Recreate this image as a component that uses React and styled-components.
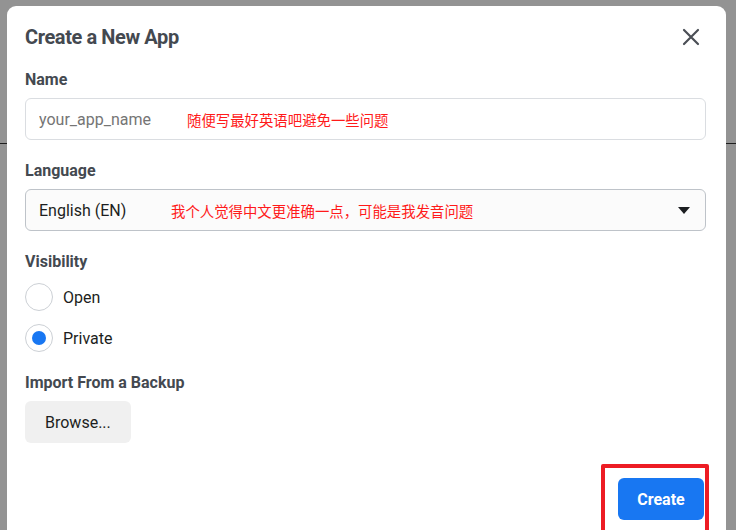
import styled, { createGlobalStyle } from 'styled-components';

const GlobalStyle = createGlobalStyle`
  body {
    margin: 0;
    background: #939393;
    overflow: hidden;
    font-family: Roboto, "Noto Sans CJK SC", sans-serif;
  }
`;

function CloseIcon() {
    return (
        <svg width="18" height="18" viewBox="0 0 18 18" fill="none">
            <path d="M2 2L16 16M16 2L2 16" stroke="#4b4f56" strokeWidth="2.2" strokeLinecap="round" />
        </svg>
    );
}

function App() {
    return (
        <>
            <GlobalStyle />
            <Page>
                <Backdrop />
                <Modal>
                    <Header>
                        <Title>Create a New App</Title>
                        <CloseButton aria-label="close"><CloseIcon /></CloseButton>
                    </Header>
                    <Body>
                        <Field>
                            <Label>Name</Label>
                            <Control>
                                <TextInput placeholder="your_app_name" />
                                <Note left={162}>随便写最好英语吧避免一些问题</Note>
                            </Control>
                        </Field>

                        <Field>
                            <Label>Language</Label>
                            <Control>
                                <Select>
                                    <span>English (EN)</span>
                                    <Caret />
                                </Select>
                                <Note left={146}>我个人觉得中文更准确一点，可能是我发音问题</Note>
                            </Control>
                        </Field>

                        <Field>
                            <Label>Visibility</Label>
                            <RadioList>
                                <RadioRow>
                                    <RadioCircle />
                                    <RadioText>Open</RadioText>
                                </RadioRow>
                                <RadioRow>
                                    <RadioCircle checked />
                                    <RadioText>Private</RadioText>
                                </RadioRow>
                            </RadioList>
                        </Field>

                        <Field>
                            <Label>Import From a Backup</Label>
                            <div>
                                <BrowseButton>Browse...</BrowseButton>
                            </div>
                        </Field>
                    </Body>
                    <Footer>
                        <CreateWrap>
                            <CreateButton>Create</CreateButton>
                            <Highlight />
                        </CreateWrap>
                    </Footer>
                </Modal>
            </Page>
        </>
    );
}

const Page = styled.div`
  position: relative;
  height: 530px;
  overflow: hidden;
`;

const Backdrop = styled.div`
  height: 143px;
  border-bottom: 1px solid #1e1e1e;
`;

const Modal = styled.div`
  position: absolute;
  top: 6px;
  left: 7px;
  width: 719px;
  height: 560px;
  background: #fff;
  border-radius: 9px;
  padding: 0 20px 0 18px;
  box-sizing: border-box;
`;

const Header = styled.div`
  display: flex;
  align-items: center;
  justify-content: space-between;
  height: 62px;
`;

const Title = styled.h2`
  margin: 0;
  font-size: 20px;
  font-weight: 700;
  color: #444950;
  letter-spacing: -0.4px;
`;

const CloseButton = styled.button`
  border: none;
  background: none;
  padding: 0;
  width: 24px;
  height: 24px;
  display: flex;
  align-items: center;
  justify-content: center;
  margin-right: 3px;
  cursor: pointer;
`;

const Body = styled.div`
  display: flex;
  flex-direction: column;
  gap: 21px;
  padding-top: 2px;
`;

const Field = styled.div`
  display: flex;
  flex-direction: column;
`;

const Label = styled.div`
  font-size: 16px;
  line-height: 20px;
  font-weight: 700;
  color: #444950;
  margin-bottom: 8px;
`;

const Control = styled.div`
  position: relative;
`;

const TextInput = styled.input`
  width: 100%;
  height: 42px;
  box-sizing: border-box;
  border: 1px solid #dadde1;
  border-radius: 6px;
  padding: 0 13px;
  font-family: Roboto, sans-serif;
  font-size: 16px;
  color: #1c1e21;
  outline: none;

  ::placeholder {
    color: #90949c;
  }
`;

const Select = styled.div`
  height: 42px;
  box-sizing: border-box;
  border: 1px solid #bec3c9;
  border-radius: 6px;
  background: #fbfbfb;
  padding: 0 15px 0 13px;
  display: flex;
  align-items: center;
  justify-content: space-between;
  font-size: 16px;
  color: #1c1e21;
`;

const Caret = styled.span`
  width: 0;
  height: 0;
  border-left: 6px solid transparent;
  border-right: 6px solid transparent;
  border-top: 7px solid #1c1e21;
`;

const Note = styled.span`
  position: absolute;
  top: 50%;
  left: ${p => p.left}px;
  transform: translateY(-50%);
  font-family: "Noto Sans CJK SC", sans-serif;
  font-size: 14.4px;
  color: #ff1a1a;
  pointer-events: none;
  white-space: nowrap;
`;

const RadioList = styled.div`
  display: flex;
  flex-direction: column;
  gap: 13px;
  margin-top: 3px;
`;

const RadioRow = styled.label`
  display: flex;
  align-items: center;
  gap: 10px;
`;

const RadioCircle = styled.span`
  width: 28px;
  height: 28px;
  box-sizing: border-box;
  border: 1px solid #ccd0d5;
  border-radius: 50%;
  display: flex;
  align-items: center;
  justify-content: center;

  &::after {
    content: '';
    display: ${p => (p.checked ? 'block' : 'none')};
    width: 14px;
    height: 14px;
    border-radius: 50%;
    background: #1877f2;
  }
`;

const RadioText = styled.span`
  font-size: 16px;
  color: #1c1e21;
`;

const BrowseButton = styled.button`
  height: 42px;
  padding: 0 20px;
  border: none;
  border-radius: 6px;
  background: #f0f0f0;
  font-family: Roboto, sans-serif;
  font-size: 16px;
  color: #1c1e21;
  cursor: pointer;
`;

const Footer = styled.div`
  display: flex;
  justify-content: flex-end;
  padding-top: 35px;
  padding-right: 2px;
`;

const CreateWrap = styled.div`
  position: relative;
`;

const CreateButton = styled.button`
  height: 42px;
  width: 86px;
  border: none;
  border-radius: 6px;
  background: #1877f2;
  color: #fff;
  font-family: Roboto, sans-serif;
  font-size: 16px;
  font-weight: 700;
  cursor: pointer;
`;

const Highlight = styled.div`
  position: absolute;
  top: -14px;
  left: -17px;
  width: 108px;
  height: 80px;
  box-sizing: border-box;
  border: 4px solid #ed1c24;
  border-radius: 2px;
  pointer-events: none;
`;

export default App;
